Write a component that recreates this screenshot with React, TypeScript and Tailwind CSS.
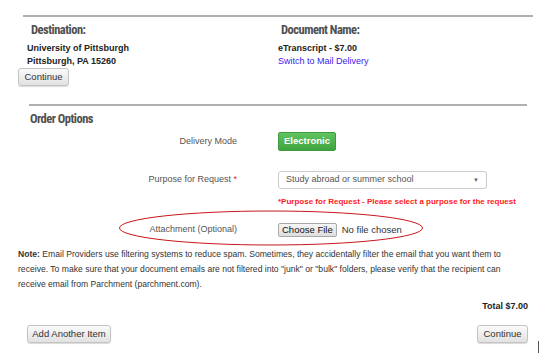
import React from "react";

const btn =
  "h-[18px] flex items-center justify-center rounded-[3px] border border-[#c4c4c4] bg-gradient-to-b from-[#fafafa] to-[#e2e2e2] text-[9.5px] text-[#333] shadow-[0_1px_1px_rgba(0,0,0,0.15)]";

const head =
  "text-[12.5px] leading-[16px] font-bold text-[#4f4f4f] font-['Liberation_Sans_Narrow','Roboto_Condensed',Arial,sans-serif] tracking-[-0.5px]";

export default function App() {
  return (
    <div className="relative w-[540px] h-[356px] overflow-hidden bg-white font-['Liberation_Sans',Arial,sans-serif] text-[#333]">
      {/* top section */}
      <div className="mt-[15px] ml-[23px] w-[510px] h-[2px] bg-[#b0b0b0]" />
      <div className="flex">
        <div className="w-[278px]">
          <div className={head + " pl-[31px] mt-[5px]"}>Destination:</div>
          <div className="pl-[27px] mt-[4px] text-[9px] leading-[13px] font-bold text-[#222]">
            <div>University of Pittsburgh</div>
            <div>Pittsburgh, PA 15260</div>
          </div>
          <div className={btn + " ml-[18px] w-[51px]"}>Continue</div>
        </div>
        <div className="flex-1">
          <div className={head + " pl-[3px] mt-[5px]"}>Document Name:</div>
          <div className="mt-[4px] text-[9px] leading-[13px]">
            <div className="font-bold text-[#222]">eTranscript - $7.00</div>
            <div className="text-[#3a1cf2]">Switch to Mail Delivery</div>
          </div>
        </div>
      </div>

      {/* order options */}
      <div className="mt-[18px] ml-[29px] w-[498px] h-[2px] bg-[#b0b0b0]" />
      <div className={head + " pl-[30px] mt-[5px]"}>Order Options</div>

      <div className="mt-[5px] flex items-center h-[19px]">
        <div className="w-[237px] text-right text-[9px] text-[#555]">Delivery Mode</div>
        <div className="ml-[41px] w-[58px] h-[19px] flex items-center justify-center rounded-[2px] border border-[#3f9a3f] bg-gradient-to-b from-[#5fc45f] to-[#3fa33f] text-[9.5px] font-bold text-white">
          Electronic
        </div>
      </div>

      <div className="mt-[20px] flex items-center h-[18px]">
        <div className="w-[237px] text-right text-[9px] text-[#555]">
          Purpose for Request <span className="text-[#e02020]">*</span>
        </div>
        <div className="ml-[41px] w-[209px] h-[18px] flex items-center justify-between rounded-[3px] border border-[#ccc] bg-white px-[7px] text-[9px] text-[#555]">
          <span>Study abroad or summer school</span>
          <span className="text-[6px] text-[#666]">▼</span>
        </div>
      </div>

      <div className="mt-[7px] pl-[278px] text-[8px] leading-[12px] font-bold text-[#ff1a1a] whitespace-nowrap">
        *Purpose for Request - Please select a purpose for the request
      </div>

      <div className="mt-[14px] flex items-center h-[16px]">
        <div className="w-[237px] text-right text-[9px] text-[#555]">Attachment (Optional)</div>
        <div className="ml-[41px] flex items-center whitespace-nowrap">
          <div className="h-[14px] px-[3px] flex items-center justify-center rounded-[2px] border border-[#a9a9a9] bg-gradient-to-b from-[#f6f6f6] to-[#dedede] text-[9.5px] text-[#111]">
            Choose File
          </div>
          <span className="ml-[5px] text-[9.5px] text-[#333]">No file chosen</span>
        </div>
      </div>

      <div className="mt-[9px] pl-[18px] pr-[18px] text-[8.6px] leading-[15px] text-[#333]">
        <span className="font-bold">Note:</span> Email Providers use filtering systems to reduce spam. Sometimes, they
        accidentally filter the email that you want them to receive. To make sure that your document emails are not
        filtered into "junk" or "bulk" folders, please verify that the recipient can receive email from Parchment
        (parchment.com).
      </div>

      <div className="mt-[8px] pr-[12px] text-right text-[9px] leading-[13px] font-bold text-[#222]">Total $7.00</div>

      <div className="mt-[12px] flex justify-between pl-[27px] pr-[12px]">
        <div className={btn + " w-[84px]"}>Add Another Item</div>
        <div className={btn + " w-[51px]"}>Continue</div>
      </div>

      {/* red ellipse annotation */}
      <svg className="absolute left-[117px] top-[209px]" width="308" height="38" viewBox="0 0 308 38">
        <ellipse cx="154" cy="19" rx="151.5" ry="17" fill="none" stroke="#c8161d" strokeWidth="1" />
      </svg>

      {/* cursor line */}
      <div className="absolute left-[538px] top-[341px] w-[1px] h-[12px] bg-[#555]" />
    </div>
  );
}
